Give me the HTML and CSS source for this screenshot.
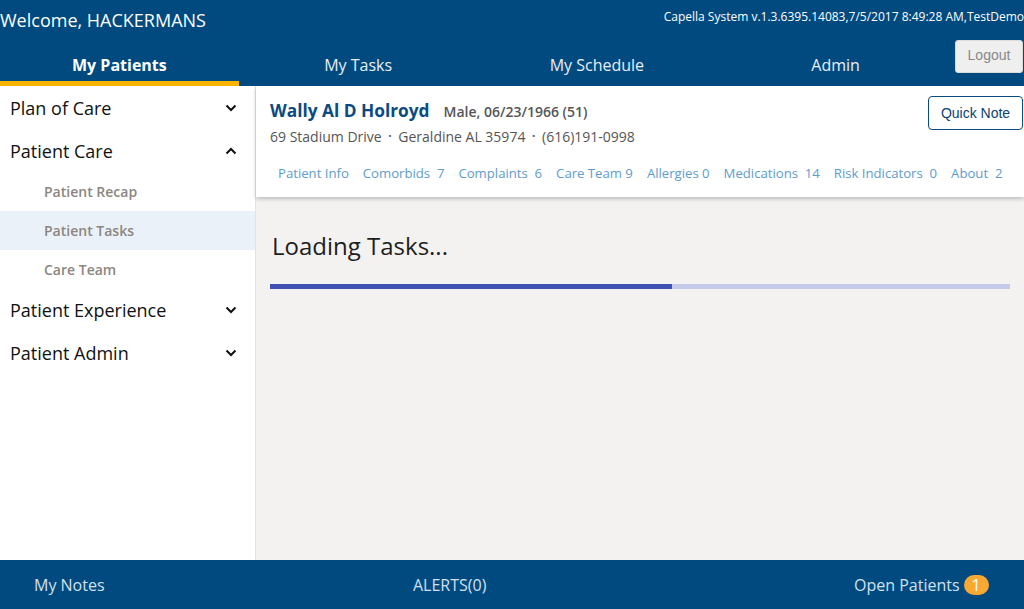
FILE: index.html
```html
<!DOCTYPE html>
<html>
<head>
<meta charset="utf-8">
<link rel="stylesheet" href="styles.css">
</head>
<body>
<div class="app">
  <header class="header">
    <div class="top-row">
      <div class="welcome">Welcome, HACKERMANS</div>
      <div class="version">Capella System v.1.3.6395.14083,7/5/2017 8:49:28 AM,TestDemo</div>
    </div>
    <nav class="nav-row">
      <div class="tab active">My Patients</div>
      <div class="tab">My Tasks</div>
      <div class="tab">My Schedule</div>
      <div class="tab">Admin</div>
      <div class="logout-wrap"><button class="logout">Logout</button></div>
    </nav>
  </header>
  <div class="main">
    <aside class="sidebar">
      <div class="group">Plan of Care
        <svg class="chev" viewBox="0 0 12 8" width="12" height="8"><path d="M1.5 1.5 L6 6 L10.5 1.5" fill="none" stroke="#111" stroke-width="2"/></svg>
      </div>
      <div class="group">Patient Care
        <svg class="chev" viewBox="0 0 12 8" width="12" height="8"><path d="M1.5 6.5 L6 2 L10.5 6.5" fill="none" stroke="#111" stroke-width="2"/></svg>
      </div>
      <div class="sub">Patient Recap</div>
      <div class="sub selected">Patient Tasks</div>
      <div class="sub">Care Team</div>
      <div class="group">Patient Experience
        <svg class="chev" viewBox="0 0 12 8" width="12" height="8"><path d="M1.5 1.5 L6 6 L10.5 1.5" fill="none" stroke="#111" stroke-width="2"/></svg>
      </div>
      <div class="group">Patient Admin
        <svg class="chev" viewBox="0 0 12 8" width="12" height="8"><path d="M1.5 1.5 L6 6 L10.5 1.5" fill="none" stroke="#111" stroke-width="2"/></svg>
      </div>
    </aside>
    <section class="content">
      <div class="card">
        <div class="card-top">
          <div class="card-info">
            <div class="name-line"><span class="pname">Wally Al D Holroyd</span><span class="demo">Male, 06/23/1966 (51)</span></div>
            <div class="address">69 Stadium Drive <span class="dot">•</span> Geraldine AL 35974 <span class="dot">•</span> (616)191-0998</div>
          </div>
          <button class="quick">Quick Note</button>
        </div>
        <div class="links">
          <span>Patient Info</span>
          <span>Comorbids&nbsp; 7</span>
          <span>Complaints&nbsp; 6</span>
          <span>Care Team 9</span>
          <span>Allergies 0</span>
          <span>Medications&nbsp; 14</span>
          <span>Risk Indicators&nbsp; 0</span>
          <span>About&nbsp; 2</span>
        </div>
      </div>
      <div class="loading">
        <div class="loading-title">Loading Tasks...</div>
        <div class="progress"><div class="progress-fill" style="width:54.3%"></div></div>
      </div>
    </section>
  </div>
  <footer class="footer">
    <div class="f-left">My Notes</div>
    <div class="f-mid">ALERTS(0)</div>
    <div class="f-right">Open Patients <span class="badge">1</span></div>
  </footer>
</div>
</body>
</html>
```
FILE: styles.css
```css
* { box-sizing: border-box; }
html, body { margin: 0; padding: 0; }
body {
  font-family: "Open Sans", "Noto Sans", sans-serif;
  width: 1024px;
  height: 609px;
  overflow: hidden;
}
.app {
  display: flex;
  flex-direction: column;
  height: 609px;
}
.header {
  background: #004a80;
  color: #fff;
  height: 86px;
  flex: none;
}
.top-row {
  display: flex;
  justify-content: space-between;
  align-items: center;
  height: 40px;
}
.welcome {
  font-size: 18px;
  line-height: 40px;
}
.version {
  font-size: 12px;
  line-height: 14px;
  margin-top: -6px;
}
.nav-row {
  display: flex;
  height: 46px;
}
.tab {
  width: 239px;
  text-align: center;
  font-size: 16px;
  line-height: 20px;
  padding-top: 15px;
  color: #e9eff5;
  border-bottom: 5px solid transparent;
}
.tab.active {
  font-weight: 700;
  color: #fff;
  border-bottom-color: #f9b400;
}
.logout-wrap {
  flex: 1;
  display: flex;
  justify-content: flex-end;
  align-items: flex-start;
  padding-right: 1px;
}
.logout {
  width: 68px;
  height: 33px;
  background: #efefef;
  border: 1px solid #dcdcdc;
  border-radius: 3px;
  color: #888;
  font-family: "Liberation Sans", Arial, sans-serif;
  font-size: 14px;
  padding: 0 0 4px;
}
.main {
  flex: 1;
  display: flex;
  min-height: 0;
}
.sidebar {
  width: 256px;
  flex: none;
  background: #fff;
  border-right: 1px solid #e2e2e2;
}
.group {
  height: 43px;
  display: flex;
  align-items: center;
  justify-content: space-between;
  padding: 0 18px 0 10px;
  font-size: 18px;
  color: #111;
}
.group:nth-child(n+6) { padding-bottom: 2px; }
.chev { display: block; }
.sub {
  height: 39px;
  display: flex;
  align-items: center;
  padding-left: 44px;
  font-size: 14px;
  font-weight: 600;
  color: #8b867f;
}
.sub.selected { background: #eaf1f8; }
.content {
  flex: 1;
  background: #f3f2f1;
  display: flex;
  flex-direction: column;
}
.card {
  background: #fff;
  height: 111px;
  box-shadow: 0 2px 4px rgba(0,0,0,0.22);
  padding: 10px 1px 0 14px;
  position: relative;
}
.card-top {
  display: flex;
  justify-content: space-between;
  align-items: flex-start;
}
.name-line {
  display: flex;
  align-items: baseline;
  height: 30px;
  padding-top: 3px;
}
.pname {
  font-size: 17.3px;
  font-weight: 700;
  color: #0b4a82;
  margin-right: 14px;
}
.demo {
  font-size: 14px;
  font-weight: 600;
  color: #555;
}
.address {
  font-size: 14px;
  color: #555;
  line-height: 20px;
}
.dot { font-size: 9px; vertical-align: 3px; margin: 0 3px; }
.quick {
  width: 95px;
  height: 34px;
  background: #fff;
  border: 1px solid #0b4a82;
  border-radius: 4px;
  color: #0b3f70;
  font-family: "Liberation Sans", Arial, sans-serif;
  font-size: 14px;
  padding: 0;
}
.links {
  display: flex;
  gap: 14px;
  padding-left: 8px;
  margin-top: 17px;
  font-size: 13.15px;
  color: #609ccb;
  line-height: 18px;
}
.loading {
  padding: 34px 14px 0 14px;
}
.loading-title {
  font-size: 24px;
  font-weight: 400;
  color: #1e1e1e;
  line-height: 30px;
  padding-left: 2px;
}
.progress {
  margin-top: 23px;
  height: 5px;
  background: #c5cae9;
  width: 740px;
}
.progress-fill {
  height: 100%;
  background: #3f51b5;
}
.footer {
  height: 49px;
  flex: none;
  background: #004a80;
  color: #d3e0ee;
  font-size: 16px;
  display: flex;
  align-items: center;
  position: relative;
}
.f-left { padding-left: 34px; width: 413px; }
.f-mid { width: 441px; }
.f-right { display: flex; align-items: center; gap: 4px; }
.badge {
  display: inline-flex;
  align-items: center;
  justify-content: center;
  width: 25px;
  height: 20px;
  border-radius: 10px;
  background: #f9a832;
  color: #fff;
  font-size: 16px;
}
```
